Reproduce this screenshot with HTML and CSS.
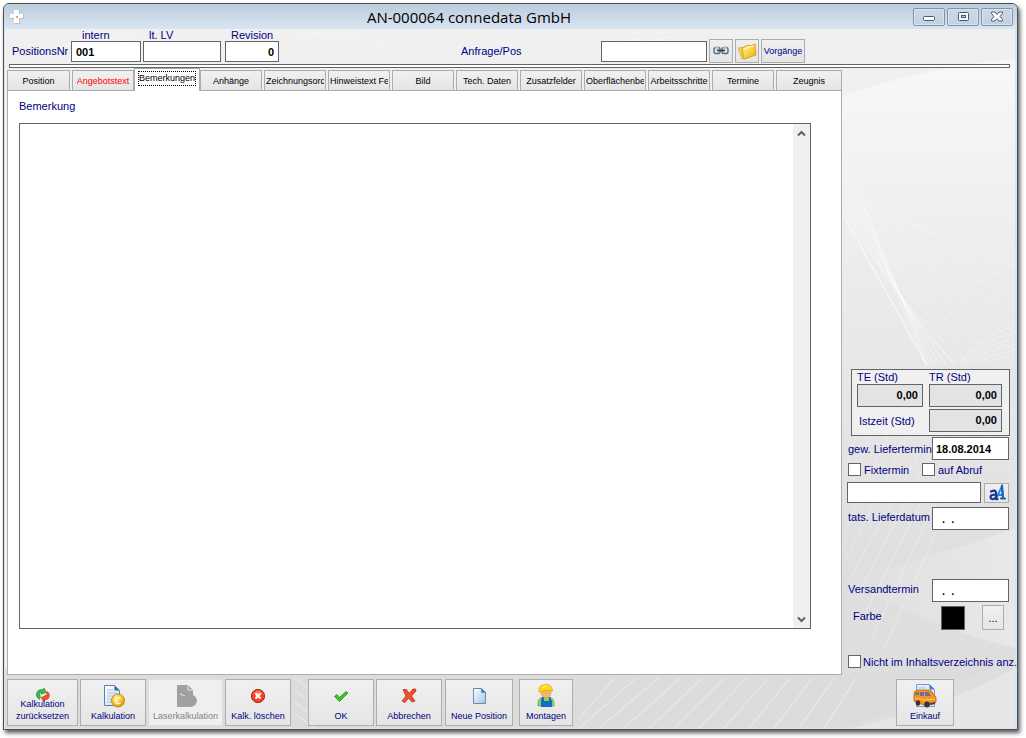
FILE: index.html
```html
<!DOCTYPE html>
<html lang="de">
<head>
<meta charset="utf-8">
<meta name="viewport" content="width=device-width, initial-scale=1">
<title>AN-000064 connedata GmbH</title>
<link rel="stylesheet" href="styles.css">
</head>
<body>
<div class="window">
  <header class="titlebar">
    <svg class="app-icon" width="16" height="16" viewBox="0 0 16 16" aria-hidden="true">
      <path d="M6 1h5v4h4v5h-4v5H6v-5H1V5h5z" fill="#9fb6c8" opacity=".7"/>
      <path d="M5 1h5v4h4v4h-4v5H5V9H1V5h4z" fill="#fff"/>
      <path d="M7 7h2v2H7z" fill="#e9a06a"/>
    </svg>
    <h1 class="title">AN-000064 connedata GmbH</h1>
    <div class="win-controls">
      <button class="win-btn" type="button" aria-label="Minimieren"><svg width="14" height="12" viewBox="0 0 14 12"><rect x="1.5" y="5.500" width="11" height="4" rx="1" fill="#fff" stroke="#50596b"/></svg></button>
      <button class="win-btn" type="button" aria-label="Maximieren"><svg width="14" height="12" viewBox="0 0 14 12"><rect x="2.500" y="1.500" width="10" height="8" rx="1" fill="#f4f7fa" stroke="#50596b"/><rect x="5.500" y="4.500" width="4" height="2" fill="#b9cbdc" stroke="#50596b"/></svg></button>
      <button class="win-btn" type="button" aria-label="Schließen"><svg width="14" height="12" viewBox="0 0 14 12"><path d="M1.500 1h3.500l2 2.500L9 1h3.500v1.500L10 5.500l2.500 3V10H9L7 7.700 5 10H1.500V8.500L4 5.500l-2.500-3z" fill="#fff" stroke="#50596b"/></svg></button>
    </div>
  </header>

  <div class="client">
    <svg class="backdrop" viewBox="0 0 1011 700" preserveAspectRatio="none" aria-hidden="true">
      <defs>
        <linearGradient id="sheen" x1="0" y1="0" x2="0" y2="1"><stop offset="0" stop-color="#f8f8f8"/><stop offset=".4" stop-color="#e9e9e9"/><stop offset=".75" stop-color="#dfdfdf"/><stop offset="1" stop-color="#dedede"/></linearGradient>
        <linearGradient id="glow" x1="0" y1="0" x2="1" y2="0"><stop offset="0" stop-color="#e8e8e8" stop-opacity="0"/><stop offset="1" stop-color="#e8e8e8"/></linearGradient>
      </defs>
      <path d="M836 68Q920 38 1011 30V700H0V640H836z" fill="url(#sheen)"/>
      <path d="M836 550Q930 600 1011 620V500Q930 530 836 550z" fill="url(#glow)"/>
      <path d="M836 646Q940 640 1011 630Q920 670 840 700H0V644z" fill="#d9d9d9" opacity=".5"/>
      <path d="M1011 640V700H850Q950 675 1011 640z" fill="#e6e6e6"/>
      <g class="strands">
        <path d="M839 128Q856 158 866 192T922 337M839 138Q872 200 923 336M839 148Q872 208 926 336M839 158Q876 222 930 336M839 166Q878 232 935 336M839 174Q882 248 942 336M839 180Q884 258 950 336M839 184L922 337M839 187L924 337"/>
      </g>
      <g class="strands faint">
        <path d="M860 170Q930 210 1011 238M863 178Q930 222 1011 253M867 190Q935 238 1011 268M870 200Q940 252 1011 284M874 210Q940 265 1011 297M878 222Q940 278 1011 309M883 232Q945 292 1011 322M888 243Q945 302 1011 334M893 256Q945 310 990 336M899 270Q940 316 966 336M905 286Q935 320 952 336"/>
        <path d="M958 330Q980 305 1011 298M956 332Q980 311 1011 304M954 334Q985 316 1011 310M956 336Q985 321 1011 316M962 336Q985 326 1011 322M968 336Q990 331 1011 328"/>
        <path d="M842 440L870 345M842 470L890 345M842 500L912 345M842 530L935 345M846 550L945 370M852 570L950 380M858 590L960 390M868 610L965 400M880 620L970 420M950 345L1011 450M965 345L1011 430M980 345L1011 410M990 345L1011 390"/>
      </g>
      <g class="strands faint">
        <path d="M80 2Q130 10 150 34M96 2Q145 10 165 34M112 2Q160 10 180 34M20 34Q50 10 90 2M35 34Q65 10 105 2M265 2Q315 10 340 34M280 2Q340 8 375 34M295 2Q360 8 390 34M310 2Q375 8 405 34M325 2Q390 8 420 34M570 34Q590 10 640 2M590 34Q610 10 670 2M610 34Q630 10 700 2M630 34Q640 18 720 10M650 34Q690 4 760 34"/>
      </g>
      <g class="strands">
        <path d="M290 650L310 664M290 662L310 678M290 674L310 690M290 686L310 700M575 690L610 650M575 700L632 650M595 700L654 650M620 700L676 650M645 700L698 650M670 700L720 650M695 700L742 650M720 700L764 650M745 700L786 650M770 700L808 650M795 700L830 650M820 700L852 650"/>
      </g>
    </svg>

    <div class="head">
      <label class="lbl row-label" for="intern">PositionsNr</label>
      <div class="stack stack-intern"><label class="lbl" for="intern">intern</label><input class="field" id="intern" type="text" value="001"></div>
      <div class="stack stack-lv"><label class="lbl" for="lv">lt. LV</label><input class="field" id="lv" type="text"></div>
      <div class="stack stack-rev"><label class="lbl" for="rev">Revision</label><input class="field num" id="rev" type="text" value="0"></div>
      <label class="lbl request-label" for="anfrage">Anfrage/Pos</label>
      <div class="request">
        <input class="field" id="anfrage" type="text">
        <button class="btn tool" type="button" aria-label="Verknüpfung"><svg width="16" height="10" viewBox="0 0 16 10"><g fill="#dfe8ee" stroke="#5b6b78" stroke-width="1.400"><rect x="1" y="1.500" width="6" height="6" rx="1.500"/><rect x="9" y="1.500" width="6" height="6" rx="1.500"/></g><path d="M4 4.500h8" stroke="#384650" stroke-width="1.800"/><path d="M2 1.500h4M10 1.500h4" stroke="#a9bac6"/></svg></button>
        <button class="btn tool" type="button" aria-label="Ordner"><svg width="20" height="18" viewBox="0 0 20 18"><defs><linearGradient id="fold" x1="0" y1="0" x2="1" y2="1"><stop offset="0" stop-color="#fff3a6"/><stop offset=".5" stop-color="#fcd548"/><stop offset="1" stop-color="#e5a50f"/></linearGradient></defs><path d="M1 6l5-1 5 11-6 1-2-6z" fill="#f3cc4e" stroke="#d5a42b" stroke-width=".6"/><path d="M5 6l3-1V4l4-1 1 1 5-2 1 11-12 4z" fill="url(#fold)" stroke="#cf9a1d" stroke-width=".8"/><path d="M7 7l9-3" stroke="#fff9cf"/></svg></button>
        <button class="btn tool tool-text" type="button">Vorgänge</button>
      </div>
    </div>
    <hr class="rule">

    <div class="main">
      <div class="book">
        <div class="tabs" role="tablist">
          <button class="tab" role="tab" type="button"><span>Position</span></button>
          <button class="tab alert" role="tab" type="button"><span>Angebotstext</span></button>
          <button class="tab active" role="tab" type="button" aria-selected="true"><span>Bemerkungen</span></button>
          <button class="tab" role="tab" type="button"><span>Anhänge</span></button>
          <button class="tab" role="tab" type="button"><span>Zeichnungsord</span></button>
          <button class="tab" role="tab" type="button"><span>Hinweistext Fe</span></button>
          <button class="tab" role="tab" type="button"><span>Bild</span></button>
          <button class="tab" role="tab" type="button"><span>Tech. Daten</span></button>
          <button class="tab" role="tab" type="button"><span>Zusatzfelder</span></button>
          <button class="tab" role="tab" type="button"><span>Oberflächenbe</span></button>
          <button class="tab" role="tab" type="button"><span>Arbeitsschritte</span></button>
          <button class="tab" role="tab" type="button"><span>Termine</span></button>
          <button class="tab" role="tab" type="button"><span>Zeugnis</span></button>
        </div>
        <section class="page" role="tabpanel">
          <label class="lbl" for="bemerkung">Bemerkung</label>
          <div class="memo">
            <textarea class="memo-text" id="bemerkung"></textarea>
            <div class="scroll">
              <button class="scroll-btn" type="button" aria-label="Nach oben"><svg width="9" height="7" viewBox="0 0 9 7"><path d="M1 5.500l3.500-3.500L8 5.500" fill="none" stroke="#606060" stroke-width="2"/></svg></button>
              <button class="scroll-btn" type="button" aria-label="Nach unten"><svg width="9" height="7" viewBox="0 0 9 7"><path d="M1 1.500L4.500 5 8 1.500" fill="none" stroke="#606060" stroke-width="2"/></svg></button>
            </div>
          </div>
        </section>
      </div>

      <aside class="side">
        <div class="times">
          <label class="lbl" for="te">TE (Std)</label>
          <label class="lbl" for="tr">TR (Std)</label>
          <input class="field num grey" id="te" type="text" value="0,00" readonly>
          <input class="field num grey" id="tr" type="text" value="0,00" readonly>
          <label class="lbl actual" for="ist">Istzeit (Std)</label>
          <input class="field num grey" id="ist" type="text" value="0,00" readonly>
        </div>
        <div class="line date-line first"><label class="lbl" for="gew">gew. Liefertermin</label><input class="field date" id="gew" type="text" value="18.08.2014"></div>
        <div class="line checks">
          <label class="lbl check"><input type="checkbox">Fixtermin</label>
          <label class="lbl check"><input type="checkbox">auf Abruf</label>
        </div>
        <div class="line note-line">
          <input class="field" type="text" aria-label="Terminhinweis">
          <button class="btn font-btn" type="button" aria-label="Schrift"><svg width="18" height="18" viewBox="0 0 18 18"><g fill="none" stroke-linecap="round"><path d="M8 15L14 2l1 12M9 11h6" stroke="#2b82d9" stroke-width="1.800"/><path d="M14 2l1 12M13 14.500h4" stroke="#1560bf" stroke-width="2.200"/><path d="M3 7.500Q8 5 8 9v5.500q0 1 1.500.5M8 10.500Q2 10.500 2.500 13.500 4 17 8 13.500" stroke="#17398c" stroke-width="2.200"/></g></svg></button>
        </div>
        <div class="line date-line"><label class="lbl" for="tats">tats. Lieferdatum</label><input class="field date" id="tats" type="text" value="  .  ."></div>
        <div class="line date-line ship"><label class="lbl" for="vers">Versandtermin</label><input class="field date" id="vers" type="text" value="  .  ."></div>
        <div class="line color-line">
          <span class="lbl">Farbe</span>
          <button class="swatch" type="button" aria-label="Farbe"></button>
          <button class="btn dots" type="button">...</button>
        </div>
        <label class="lbl check hide-check"><input type="checkbox">Nicht im Inhaltsverzeichnis anz.</label>
      </aside>
    </div>

    <footer class="actions">
      <button class="btn act w-reset" type="button">
        <svg class="icon-reset" width="18" height="16" viewBox="0 0 18 16"><path d="M5 13Q0 10 2 5 4 1 9 2l1-2 3 5-6 2 1-2Q4 5 6 10z" fill="#3dbb48" stroke="#1c8c31" stroke-width=".7"/><path d="M14 4q4 4 1 8-2 2-4 1l-1 3-3-5 6-3-1 3q3-1 1-5z" fill="#f4542c" stroke="#c62d16" stroke-width=".7"/></svg>
        <span>Kalkulation<br>zurücksetzen</span></button>
      <button class="btn act w-m" type="button">
        <svg width="24" height="24" viewBox="0 0 24 24"><defs><linearGradient id="doc" x1="0" y1="0" x2="1" y2="1"><stop offset="0" stop-color="#fff"/><stop offset="1" stop-color="#c5dcf3"/></linearGradient><radialGradient id="coin" cx=".35" cy=".3" r=".8"><stop offset="0" stop-color="#fff09a"/><stop offset=".6" stop-color="#f6bd28"/><stop offset="1" stop-color="#d58b0a"/></radialGradient></defs><path d="M3.500 1.500h10l5 5v15h-15z" fill="url(#doc)" stroke="#5c81ad"/><path d="M13.500 1.500v5h5z" fill="#3769a5"/><path d="M6 6h6M6 9h10M6 12h7M6 15h5M6 18h5" stroke="#a7c0db"/><circle cx="17" cy="16.500" r="6.500" fill="url(#coin)" stroke="#c98a0c"/><path d="M19.500 14q-5-2-5 2.500T19.500 19M13.500 16.500h4" fill="none" stroke="#fff6c8" stroke-width="1.500"/></svg>
        <span>Kalkulation</span></button>
      <button class="btn act w-laser" type="button" disabled>
        <svg width="24" height="24" viewBox="0 0 24 24"><path d="M3 1h11l5 5v5q4 2 4 6-1 6-8 6H3z" fill="#a0a0a0"/><path d="M14 1v5h5M6 10l5 2" fill="none" stroke="#e8e8e8"/></svg>
        <span>Laserkalkulation</span></button>
      <button class="btn act w-m gap-after" type="button">
        <svg width="16" height="16" viewBox="0 0 16 16"><circle cx="8" cy="8" r="6.600" fill="#ef4520" stroke="#a52c17"/><path d="M3 6Q8-1 13 6z" fill="#ff9b7c" opacity=".6"/><path d="M5.500 5.500l5 5M10.500 5.500l-5 5" stroke="#fff" stroke-width="2.200"/></svg>
        <span>Kalk. löschen</span></button>
      <button class="btn act w-m" type="button">
        <svg width="16" height="16" viewBox="0 0 16 16"><path d="M1.500 8.500l2.500-2 2.500 3L13 3.500l2 1.500-8.500 8.500z" fill="#3bc526" stroke="#27891b" stroke-width=".8" stroke-linejoin="round"/></svg>
        <span>OK</span></button>
      <button class="btn act w-m" type="button">
        <svg width="16" height="16" viewBox="0 0 16 16"><path d="M2 1.500h3.500L8 5.500 12 1h2.500l.5 2-4.500 5 3.500 5-3 1-3.500-4L4 14.500 1 13l4-5z" fill="#f05030" stroke="#bd3018" stroke-width=".8" stroke-linejoin="round"/></svg>
        <span>Abbrechen</span></button>
      <button class="btn act w-new" type="button">
        <svg width="16" height="16" viewBox="0 0 16 16"><defs><linearGradient id="sheet" x1="0" y1="0" x2="1" y2="1"><stop offset="0" stop-color="#fff"/><stop offset="1" stop-color="#9cc8ef"/></linearGradient></defs><path d="M2.500.5h8l4 4v11h-12z" fill="url(#sheet)" stroke="#7189a3"/><path d="M10.500.5v4h4z" fill="#4587c6" stroke="#4c78a5" stroke-width=".6"/></svg>
        <span>Neue Position</span></button>
      <button class="btn act w-mont" type="button">
        <svg width="20" height="24" viewBox="0 0 20 24"><path d="M2 22q-1-8 5-9h6q6 1 5 9z" fill="#7fd45c" stroke="#55a83b" stroke-width=".6"/><path d="M5 23v-6l1-4h2v4h5v-4h1l2 4v6z" fill="#1769c5"/><path d="M5 6h10q1 7-5 8-6-1-5-8z" fill="#f6b56a" stroke="#d78c43" stroke-width=".5"/><path d="M3 8q-1-7 6-7.500Q15 0 16 5l1 2-5-1z" fill="#ffd916" stroke="#d8a600" stroke-width=".7"/><path d="M6 4q2-3 5-2" fill="none" stroke="#fff5a6"/></svg>
        <span>Montagen</span></button>
      <button class="btn act w-buy" type="button">
        <svg width="24" height="24" viewBox="0 0 24 24"><path d="M3.500.5h13l5 5v17h-18z" fill="#e2edfb" stroke="#7d99cf"/><path d="M16.500.5v5h5z" fill="#3f7fc4"/><path d="M5 4h8" stroke="#a9c1e5"/><path d="M1 9q1-3 4-3h11q3 0 5 5l2 2v5l-3 2-9 1-9-3-1-2z" fill="#f89322" stroke="#bf6112" stroke-width=".8"/><path d="M3 8h3v3H2zM7 8h4v4H7zM12 8h4l2 4h-6z" fill="#60779c"/><path d="M2 14l9 2 11-1" stroke="#ffc56e" fill="none"/><ellipse cx="5" cy="19" rx="2.200" ry="2.800" fill="#333"/><ellipse cx="14" cy="20.500" rx="2.800" ry="3" fill="#333"/><path d="M17 20l5-1" stroke="#444" stroke-width="2"/></svg>
        <span>Einkauf</span></button>
    </footer>
  </div>
</div>
</body>
</html>
```
FILE: styles.css
```css
* { box-sizing: border-box; }

body {
  margin: 0;
  padding: 3px 8px 8px 3px;
  background: #fff;
  font: 11px/14px "Liberation Sans", Arial, sans-serif;
  color: #000;
}

button, input, textarea { font: inherit; color: inherit; margin: 0; border-radius: 0; }

.window {
  display: flex;
  flex-direction: column;
  min-height: calc(100vh - 11px);
  border: 1px solid #4a4f55;
  border-radius: 6px 6px 0 0;
  background: #d7e4f2;
  box-shadow: 2px 3px 4px rgba(0, 0, 0, .65);
}

/* Title bar */
.titlebar {
  display: flex;
  align-items: center;
  height: 25px;
  padding: 0 4px 0 5px;
  border-radius: 5px 5px 0 0;
  background: linear-gradient(#bccbdb, #d9e5f2);
}
.title {
  flex: 1;
  margin: 0;
  text-align: center;
  font: 400 15px/24px "Open Sans", "Noto Sans", sans-serif;
  white-space: nowrap;
}
.app-icon { display: block; }
.win-controls { display: flex; justify-content: flex-end; gap: 2px; }
.win-btn {
  display: grid;
  place-items: center;
  width: 32px;
  height: 18px;
  padding: 0;
  border: 1px solid #8592ae;
  border-radius: 2px;
  background: linear-gradient(#cad8e6, #c2d1e1);
  box-shadow: inset 0 0 0 1px #d9e4ef;
}

/* Client area */
.client {
  position: relative;
  z-index: 0;
  display: flex;
  flex: 1;
  flex-direction: column;
  margin: 0 2px 1px 1px;
  background: #f0f0f0;
}
.backdrop { position: absolute; inset: 0; z-index: -1; width: 100%; height: 100%; }
.strands { fill: none; stroke: #fff; stroke-width: 1; opacity: .5; }
.faint { opacity: .35; }

.lbl { color: #000080; white-space: nowrap; }

.field {
  min-width: 0;
  height: 21px;
  padding: 0 4px;
  border: 1px solid #646464;
  background: #fff;
  font-weight: 700;
}
.num { text-align: right; }
.grey { background: #e3e3e3; }

.btn {
  padding: 0;
  border: 1px solid #adadad;
  background: linear-gradient(#f0f0f0, #e5e5e5);
  color: #000080;
  font-size: 9px;
  line-height: 12px;
}

.head { display: flex; align-items: flex-end; height: 34px; padding: 0 7px 1px; }
.row-label { width: 59px; padding-bottom: 4px; }
.stack { display: flex; flex-direction: column; }
.stack .lbl { line-height: 12px; padding-left: 6px; }
.stack-intern { width: 70px; margin-right: 2px; }
.stack-intern .lbl { padding-left: 11px; }
.stack-lv { width: 78px; margin-right: 4px; }
.stack-rev { width: 54px; }
.request-label { margin-left: 182px; width: 140px; padding-bottom: 4px; }
.request { display: flex; align-items: center; gap: 2px; height: 22px; }
.request .field { width: 106px; }
.tool { display: grid; place-items: center; width: 24px; height: 24px; }
.tool-text { width: 44px; }

.rule {
  width: auto;
  height: 4px;
  margin: 1px 5px 0 4px;
  border: 1px solid #646464;
  background: #fff;
}

.main { display: flex; flex: 1; padding-left: 2px; }

/* Tabs */
.book { display: flex; flex: 1; flex-direction: column; min-width: 0; }
.tabs { display: flex; gap: 2px; height: 22px; padding-top: 2px; }
.tab {
  flex: 1 1 62px;
  display: flex;
  min-width: 0;
  align-items: center;
  justify-content: safe center;
  height: 20px;
  padding: 0 1px;
  border: 1px solid #adadad;
  border-bottom: 0;
  background: linear-gradient(#f0f0f0, #e5e5e5);
  font-size: 9px;
  line-height: 14px;
  white-space: nowrap;
}
.tab span { overflow: hidden; }
.tab:first-child { flex-basis: 63px; }
.tab:last-child { flex-basis: 66px; }
.tab.alert { color: #f00; }
.tab.active {
  z-index: 1;
  height: 23px;
  margin: -2px -2px 0;
  padding: 0 3px 4px;
  flex-basis: 66px;
  background: #fff;
}
.tab.active span { outline: 1px dotted #000; line-height: 13px; }
.page {
  display: flex;
  flex: 1;
  flex-direction: column;
  padding: 8px 30px 45px 11px;
  border: 1px solid #adadad;
  background: #fff;
}
.memo { display: flex; flex: 1; margin-top: 10px; border: 1px solid #646464; }
.memo-text { flex: 1; min-width: 0; padding: 3px; border: 0; background: #fff; resize: none; outline: 0; overflow: hidden; }
.scroll { display: flex; flex-direction: column; justify-content: space-between; width: 17px; background: #f0f0f0; }
.scroll-btn { display: grid; place-items: center; height: 18px; padding: 0; border: 0; background: none; }

/* Side column */
.side {
  display: flex;
  flex-direction: column;
  justify-content: flex-end;
  width: 173px;
  padding: 0 6px 7px 5px;
}
.times {
  display: grid;
  grid-template-columns: 66px 1fr;
  grid-template-rows: 14px 25px 23px;
  column-gap: 6px;
  margin: 0 -1px 0 4px;
  padding: 0 7px 3px 5px;
  border: 1px solid #646464;
  background: #f0f0f0;
}
.times .field { width: 100%; height: 23px; padding-bottom: 2px; }
.actual { padding: 5px 0 0 2px; }
.line { display: flex; align-items: center; }
.date-line { height: 23px; margin: 4px 0 0 1px; }
.date-line .lbl { width: 84px; padding-bottom: 3px; }
.date-line.first { margin-top: 1px; }
.date-line.first .lbl { padding-bottom: 0; }
.date { flex: 1; height: 23px; padding: 0 3px; white-space: pre; }
.date-line.ship { margin-top: 49px; }
.checks { margin-top: 3px; padding-left: 1px; }
.check { display: flex; align-items: center; gap: 3px; height: 13px; }
.checks .check { width: 74px; }
.check input {
  flex: none;
  width: 13px;
  height: 13px;
  appearance: none;
  border: 1px solid #646464;
  background: #fff;
}
.note-line { gap: 3px; margin-top: 6px; }
.note-line .field { flex: 1; }
.font-btn { display: grid; place-items: center; width: 25px; height: 20px; }
.color-line { gap: 17px; height: 25px; margin: 3px 5px 0 6px; }
.color-line .lbl { flex: 1; padding-bottom: 3px; }
.swatch { width: 24px; height: 24px; padding: 0; border: 1px solid #646464; background: #000; }
.dots { width: 22px; height: 25px; color: #000; font-size: 11px; }
.hide-check { margin: 25px -6px 0 1px; gap: 2px; }

/* Bottom bar */
.actions { display: flex; gap: 2px; padding: 4px 61px 2px 2px; }
.act {
  display: flex;
  flex: none;
  flex-direction: column;
  align-items: center;
  justify-content: space-between;
  height: 47px;
  padding: 4px 0 3px;
  white-space: nowrap;
}
.act svg[height="16"] { margin-top: 4px; }
.act .icon-reset { margin-bottom: -4px; }
.act span { position: relative; }
.act:disabled { color: #838383; border-color: #ddd; background: #efefef; }
.w-reset { width: 71px; }
.w-m { width: 66px; }
.w-laser { width: 75px; }
.gap-after { margin-right: 15px; }
.w-new { width: 68px; margin-left: 1px; }
.w-mont { width: 54px; margin-left: 4px; }
.w-buy { width: 58px; margin-left: auto; }
```
